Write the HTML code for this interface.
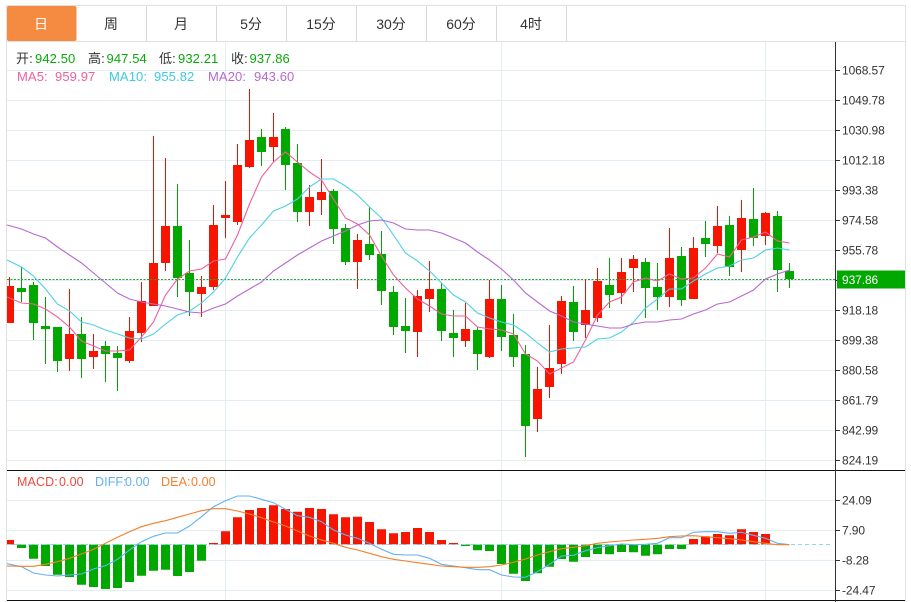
<!DOCTYPE html>
<html lang="zh-CN">
<head>
<meta charset="utf-8">
<title>K线图</title>
<style>
html,body{margin:0;padding:0;background:#fff;width:911px;height:602px;overflow:hidden}
svg{display:block;position:absolute;left:0;top:0}
text{font-family:"Liberation Sans","Noto Sans CJK SC",sans-serif}
.tab{font-size:14px;fill:#333;text-anchor:middle}
.ax{font-size:12px;fill:#333;letter-spacing:-.1px}
.lg{font-size:13px;letter-spacing:.1px}
.g{fill:#0aa80a}.k{fill:#333}
</style>
</head>
<body>
<svg width="911" height="602" viewBox="0 0 911 602" xmlns="http://www.w3.org/2000/svg">
<rect width="911" height="602" fill="#fff"/>
<!-- frame + tabs -->
<g fill="#e0e0e0" shape-rendering="crispEdges">
<rect x="6" y="5" width="900" height="1"/>
<rect x="6" y="41" width="900" height="1"/>
<rect x="6" y="5" width="1" height="597"/>
<rect x="905" y="5" width="1" height="597"/>
<rect x="146" y="6" width="1" height="35" fill="#d8d8d8"/>
<rect x="216" y="6" width="1" height="35" fill="#d8d8d8"/>
<rect x="286" y="6" width="1" height="35" fill="#d8d8d8"/>
<rect x="356" y="6" width="1" height="35" fill="#d8d8d8"/>
<rect x="426" y="6" width="1" height="35" fill="#d8d8d8"/>
<rect x="496" y="6" width="1" height="35" fill="#d8d8d8"/>
<rect x="566" y="6" width="1" height="35" fill="#d8d8d8"/>
</g>
<rect x="7" y="6" width="69.5" height="35" rx="2" fill="#f58b41"/>
<text class="tab" x="41" y="29" style="fill:#fff">日</text>
<text class="tab" x="111" y="29">周</text>
<text class="tab" x="181" y="29">月</text>
<text class="tab" x="251" y="29">5分</text>
<text class="tab" x="321" y="29">15分</text>
<text class="tab" x="391" y="29">30分</text>
<text class="tab" x="461" y="29">60分</text>
<text class="tab" x="531" y="29">4时</text>
<!-- grid -->
<path shape-rendering="crispEdges" fill="none" stroke="#e4edf4" stroke-width="1" d="M7 70.5H835M7 100.5H835M7 130.5H835M7 160.5H835M7 190.5H835M7 220.5H835M7 250.5H835M7 280.5H835M7 310.5H835M7 340.5H835M7 370.5H835M7 400.5H835M7 430.5H835M7 460.5H835M7 500.5H835M7 530.5H835M7 560.5H835M7 590.5H835M225.5 42V600M501.5 42V600M765.5 42V600"/>
<!-- candles -->
<path shape-rendering="crispEdges" fill="none" stroke="#f01000" stroke-width="1" d="M9.5 277V323M69.5 289V371M93.5 334V369M129.5 317V363M141.5 282V342M153.5 136V306M165.5 158V271M201.5 276V317M213.5 205V290M225.5 181V238M237.5 144V225M249.5 89V168M273.5 113V162M309.5 185V226M321.5 159V215M357.5 234V289M417.5 290V357M429.5 261V312M465.5 303V347M489.5 280V358M537.5 367V432M549.5 325V398M561.5 296V374M585.5 280V338M597.5 268V322M621.5 258V304M633.5 255V292M669.5 228V307M693.5 237V299M717.5 206V253M741.5 200V272M765.5 212V245"/>
<path shape-rendering="crispEdges" fill="none" stroke="#00a400" stroke-width="1" d="M21.5 267V302M33.5 282V340M45.5 297V364M57.5 327V372M81.5 317V378M105.5 341V382M117.5 346V391M177.5 184V297M189.5 240V316M261.5 129V166M285.5 127V190M297.5 144V222M333.5 189V244M345.5 224V265M369.5 207V260M381.5 231V305M393.5 286V335M405.5 298V353M441.5 283V341M453.5 310V357M477.5 327V370M501.5 285V351M513.5 314V367M525.5 345V457M573.5 286V341M609.5 258V308M645.5 258V318M657.5 263V310M681.5 247V306M705.5 221V257M729.5 216V276M753.5 188V246M777.5 211V292M789.5 263V288"/>
<path fill="#f51500" d="M7 286h7V323h-7zM65 334h9V359h-9zM89 351h9V357h-9zM125 331h9V361h-9zM137 301h9V333h-9zM149 263h9V306h-9zM161 226h9V263h-9zM197 287h9V294h-9zM209 225h9V287h-9zM221 215h9V218h-9zM233 165h9V222h-9zM245 140h9V167h-9zM269 137h9V147h-9zM305 197h9V212h-9zM317 192h9V200h-9zM353 240h9V262h-9zM413 296h9V332h-9zM425 289h9V299h-9zM461 329h9V341h-9zM485 299h9V357h-9zM533 389h9V419h-9zM545 368h9V387h-9zM557 301h9V364h-9zM581 310h9V325h-9zM593 281h9V318h-9zM617 272h9V293h-9zM629 259h9V268h-9zM665 258h9V297h-9zM689 248h9V299h-9zM713 226h9V246h-9zM737 218h9V250h-9zM761 213h9V236h-9z"/>
<path fill="#00a800" d="M17 288h9V292h-9zM29 285h9V323h-9zM41 326h9V329h-9zM53 327h9V361h-9zM77 334h9V359h-9zM101 346h9V354h-9zM113 353h9V358h-9zM173 226h9V278h-9zM185 273h9V292h-9zM257 137h9V152h-9zM281 129h9V165h-9zM293 163h9V212h-9zM329 191h9V229h-9zM341 228h9V262h-9zM365 244h9V255h-9zM377 254h9V291h-9zM389 292h9V327h-9zM401 326h9V331h-9zM437 289h9V331h-9zM449 333h9V338h-9zM473 330h9V354h-9zM497 299h9V337h-9zM509 335h9V357h-9zM521 354h9V426h-9zM569 302h9V332h-9zM605 285h9V295h-9zM641 262h9V288h-9zM653 287h9V297h-9zM677 256h9V300h-9zM701 238h9V244h-9zM725 225h9V267h-9zM749 219h9V238h-9zM773 216h9V270h-9zM785 271h9V279h-9z"/>
<!-- last price dotted line -->
<path fill="none" stroke="#22a52f" stroke-width="1" stroke-dasharray="2 1.5" d="M7 279.5H835" shape-rendering="crispEdges"/>
<!-- MA -->
<polyline fill="none" stroke="#f0609a" stroke-width="1.1" points="7,297 21.5,303 33.5,304 45.5,309 57.5,317 69.5,327 81.5,341 93.5,346 105.5,351 117.5,351 129.5,350 141.5,337 153.5,322 165.5,295 177.5,279 189.5,271 201.5,269 213.5,261 225.5,259 237.5,235 249.5,204 261.5,177 273.5,162 285.5,152 297.5,162 309.5,172 321.5,180 333.5,199 345.5,218 357.5,224 369.5,235 381.5,256 393.5,275 405.5,288 417.5,299 429.5,306 441.5,314 453.5,316 465.5,316 477.5,327 489.5,329 501.5,330 513.5,334 525.5,354 537.5,361 549.5,374 561.5,368 573.5,362 585.5,340 597.5,315 609.5,302 621.5,297 633.5,282 645.5,278 657.5,281 669.5,274 681.5,279 693.5,278 705.5,268 717.5,254 729.5,257 741.5,240 753.5,237 765.5,232 777.5,241 789.5,243"/>
<polyline fill="none" stroke="#4fd0e4" stroke-width="1.1" points="7,260 21.5,267 33.5,276 45.5,289 57.5,304 69.5,311 81.5,322 93.5,325 105.5,330 117.5,334 129.5,338 141.5,339 153.5,334 165.5,324 177.5,315 189.5,311 201.5,303 213.5,292 225.5,278 237.5,257 249.5,238 261.5,225 273.5,211 285.5,206 297.5,199 309.5,187 321.5,179 333.5,179 345.5,186 357.5,195 369.5,207 381.5,218 393.5,235 405.5,253 417.5,261 429.5,271 441.5,283 453.5,295 465.5,302 477.5,313 489.5,318 501.5,322 513.5,325 525.5,333 537.5,343 549.5,352 561.5,349 573.5,348 585.5,347 597.5,339 609.5,338 621.5,332 633.5,322 645.5,308 657.5,299 669.5,289 681.5,289 693.5,281 705.5,274 717.5,268 729.5,266 741.5,260 753.5,258 765.5,250 777.5,248 789.5,250"/>
<polyline fill="none" stroke="#b768cf" stroke-width="1.1" points="7,225 21.5,229 33.5,234 45.5,238 57.5,247 69.5,255 81.5,263 93.5,273 105.5,283 117.5,293 129.5,299 141.5,302 153.5,304 165.5,306 177.5,309 189.5,312 201.5,313 213.5,308 225.5,304 237.5,296 249.5,289 261.5,282 273.5,271 285.5,263 297.5,255 309.5,248 321.5,241 333.5,236 345.5,231 357.5,225 369.5,221 381.5,220 393.5,223 405.5,229 417.5,230 429.5,230 441.5,233 453.5,238 465.5,243 477.5,252 489.5,260 501.5,269 513.5,280 525.5,293 537.5,302 549.5,311 561.5,316 573.5,322 585.5,324 597.5,326 609.5,328 621.5,328 633.5,324 645.5,322 657.5,322 669.5,320 681.5,319 693.5,314 705.5,310 717.5,304 729.5,302 741.5,296 753.5,290 765.5,279 777.5,274 789.5,270"/>
<!-- MACD bars -->
<path fill="#f51500" d="M7 540h7V544.5h-7zM209 543h9V544.5h-9zM221 531.3h9V544.5h-9zM233 517.3h9V544.5h-9zM245 510h9V544.5h-9zM257 508h9V544.5h-9zM269 505.3h9V544.5h-9zM281 509h9V544.5h-9zM293 511.7h9V544.5h-9zM305 508h9V544.5h-9zM317 509h9V544.5h-9zM329 514.3h9V544.5h-9zM341 517.3h9V544.5h-9zM353 516.7h9V544.5h-9zM365 522h9V544.5h-9zM377 529.3h9V544.5h-9zM389 533.3h9V544.5h-9zM401 532h9V544.5h-9zM413 528h9V544.5h-9zM425 532h9V544.5h-9zM437 540h9V544.5h-9zM449 543h9V544.5h-9zM689 539h9V544.5h-9zM701 536.3h9V544.5h-9zM713 534h9V544.5h-9zM725 535.3h9V544.5h-9zM737 529.3h9V544.5h-9zM749 532h9V544.5h-9zM761 534h9V544.5h-9z"/>
<path fill="#00a800" d="M17 544.5h9V548h-9zM29 544.5h9V558.7h-9zM41 544.5h9V566h-9zM53 544.5h9V574.7h-9zM65 544.5h9V577h-9zM77 544.5h9V584.7h-9zM89 544.5h9V587h-9zM101 544.5h9V589h-9zM113 544.5h9V588h-9zM125 544.5h9V582h-9zM137 544.5h9V575.7h-9zM149 544.5h9V570.7h-9zM161 544.5h9V569.7h-9zM173 544.5h9V576h-9zM185 544.5h9V572h-9zM197 544.5h9V560.7h-9zM461 544.5h9V546h-9zM473 544.5h9V550.3h-9zM485 544.5h9V551h-9zM497 544.5h9V564h-9zM509 544.5h9V573.7h-9zM521 544.5h9V581h-9zM533 544.5h9V573.3h-9zM545 544.5h9V566.7h-9zM557 544.5h9V559h-9zM569 544.5h9V561.7h-9zM581 544.5h9V557h-9zM593 544.5h9V554h-9zM605 544.5h9V554.3h-9zM617 544.5h9V552h-9zM629 544.5h9V552.3h-9zM641 544.5h9V555.7h-9zM653 544.5h9V554.3h-9zM665 544.5h9V549h-9zM677 544.5h9V549h-9z"/>
<path fill="none" stroke="#8fd6ee" stroke-width="1" stroke-dasharray="4 3" d="M7 544.5H833" shape-rendering="crispEdges"/>
<polyline fill="none" stroke="#62b2f2" stroke-width="1.1" points="7,563.7 21.5,566.7 33.5,573 45.5,575 57.5,576 69.5,575 81.5,574 93.5,569 105.5,565.7 117.5,559.3 129.5,550 141.5,541.7 153.5,536.3 165.5,533 177.5,533 189.5,526 201.5,516.7 213.5,506.7 225.5,500.7 237.5,496 249.5,496 261.5,499.3 273.5,502.7 285.5,509.3 297.5,515.7 309.5,517.3 321.5,521.7 333.5,530 345.5,535 357.5,538.3 369.5,543.3 381.5,549.3 393.5,554.3 405.5,555 417.5,555 429.5,558.3 441.5,564.3 453.5,566 465.5,567.7 477.5,569.7 489.5,569.7 501.5,575 513.5,577 525.5,577.3 537.5,571.7 549.5,564.3 561.5,556 573.5,555.3 585.5,550.7 597.5,547.7 609.5,545.7 621.5,544 633.5,544.7 645.5,544.3 657.5,543.3 669.5,537.7 681.5,537.7 693.5,532.3 705.5,531.7 717.5,531.7 729.5,533.3 741.5,532.3 753.5,535.3 765.5,538.3 777.5,543.3 789.5,544.7"/>
<polyline fill="none" stroke="#f57f2a" stroke-width="1.1" points="7,566 21.5,566.3 33.5,566.3 45.5,564.3 57.5,561.7 69.5,558.3 81.5,554 93.5,549.3 105.5,543.3 117.5,537.3 129.5,531.7 141.5,526.7 153.5,523.3 165.5,520.7 177.5,517.3 189.5,514 201.5,510.7 213.5,508.7 225.5,508.7 237.5,511 249.5,514 261.5,517.7 273.5,522 285.5,526 297.5,531 309.5,536 321.5,540 333.5,543.3 345.5,547.3 357.5,550 369.5,553.3 381.5,556.7 393.5,559.3 405.5,561 417.5,562.7 429.5,564.3 441.5,566 453.5,566.7 465.5,567.3 477.5,567.3 489.5,566.7 501.5,565 513.5,562.3 525.5,559 537.5,555 549.5,551.7 561.5,548.7 573.5,547.3 585.5,545.7 597.5,543.3 609.5,542 621.5,541 633.5,540 645.5,539.3 657.5,538.3 669.5,536.7 681.5,536 693.5,535.7 705.5,536.7 717.5,537.7 729.5,538.7 741.5,540 753.5,541.7 765.5,543.3 777.5,544.7 789.5,544.7"/>
<!-- axes -->
<path shape-rendering="crispEdges" fill="none" stroke="#111" stroke-width="1" d="M7 470.5H905M7 600.5H905"/>
<path shape-rendering="crispEdges" fill="none" stroke="#333" stroke-width="1" d="M835.5 42V602M835 70.5h5M835 100.5h5M835 130.5h5M835 160.5h5M835 190.5h5M835 220.5h5M835 250.5h5M835 280.5h5M835 310.5h5M835 340.5h5M835 370.5h5M835 400.5h5M835 430.5h5M835 460.5h5M835 500.5h5M835 530.5h5M835 560.5h5M835 590.5h5"/>
<g class="ax">
<text class="ax" x="842" y="74.5">1068.57</text>
<text class="ax" x="842" y="104.5">1049.78</text>
<text class="ax" x="842" y="134.5">1030.98</text>
<text class="ax" x="842" y="164.5">1012.18</text>
<text class="ax" x="842" y="194.5">993.38</text>
<text class="ax" x="842" y="224.5">974.58</text>
<text class="ax" x="842" y="254.5">955.78</text>
<text class="ax" x="842" y="314.5">918.18</text>
<text class="ax" x="842" y="344.5">899.38</text>
<text class="ax" x="842" y="374.5">880.58</text>
<text class="ax" x="842" y="404.5">861.79</text>
<text class="ax" x="842" y="434.5">842.99</text>
<text class="ax" x="842" y="464.5">824.19</text>
<text class="ax" x="842" y="504.5">24.09</text>
<text class="ax" x="842" y="534.5">7.90</text>
<text class="ax" x="842" y="564.5">-8.28</text>
<text class="ax" x="842" y="594.5">-24.47</text>
</g>
<rect x="837" y="270.5" width="68" height="18" fill="#00a800"/>
<text class="ax" x="842" y="284" style="fill:#fff">937.86</text>
<!-- legends -->
<g class="lg">
<text class="lg k" x="16" y="63">开:</text><text class="lg g" x="35" y="63">942.50</text>
<text class="lg k" x="88" y="63">高:</text><text class="lg g" x="106.500" y="63">947.54</text>
<text class="lg k" x="159" y="63">低:</text><text class="lg g" x="178" y="63">932.21</text>
<text class="lg k" x="231" y="63">收:</text><text class="lg g" x="249.500" y="63">937.86</text>
<text class="lg" x="17" y="81" fill="#f0609a">MA5:</text><text class="lg" x="55" y="81" fill="#f0609a">959.97</text>
<text class="lg" x="109" y="81" fill="#3bcbe3">MA10:</text><text class="lg" x="154" y="81" fill="#3bcbe3">955.82</text>
<text class="lg" x="208" y="81" fill="#b768cf">MA20:</text><text class="lg" x="254" y="81" fill="#b768cf">943.60</text>
<text class="lg" x="17" y="486" fill="#f0483e" style="font-size:12.500px">MACD:</text><text class="lg" x="59" y="486" fill="#f0483e" style="font-size:12.500px">0.00</text>
<text class="lg" x="95" y="486" fill="#62b2f2" style="font-size:12.500px">DIFF:</text><text class="lg" x="125" y="486" fill="#62b2f2" style="font-size:12.500px">0.00</text>
<text class="lg" x="161" y="486" fill="#f57f2a" style="font-size:12.500px">DEA:</text><text class="lg" x="191" y="486" fill="#f57f2a" style="font-size:12.500px">0.00</text>
</g>
</svg>
</body>
</html>
